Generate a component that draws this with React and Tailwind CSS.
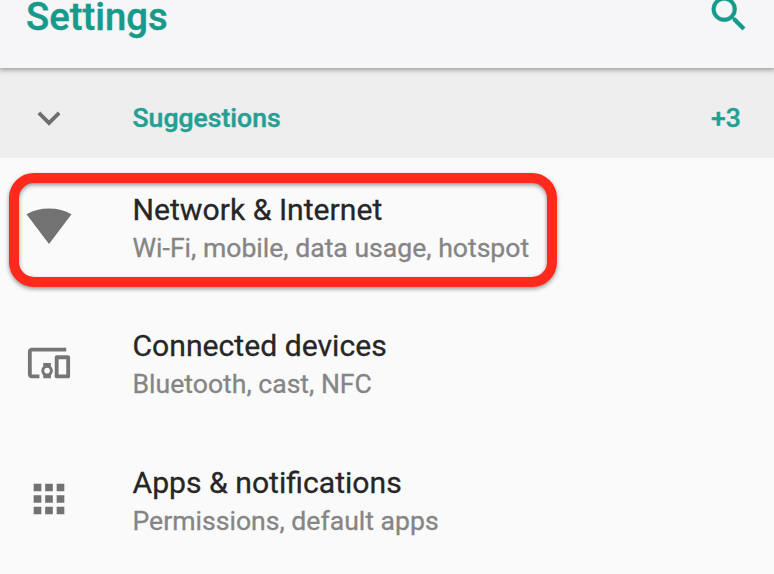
function SearchIcon() {
  return (
    <svg className="block h-[46px] w-[46px]" viewBox="0 0 24 24" fill="#159a8c" stroke="#159a8c" strokeWidth="0.2">
      <path d="M15.500 14h-.79l-.28-.27A6.471 6.471 0 0 0 16 9.500 6.500 6.500 0 1 0 9.500 16c1.610 0 3.090-.59 4.230-1.570l.27.28v.79l5 4.990L20.490 19l-4.990-5zm-6 0C7.010 14 5 11.990 5 9.500S7.010 5 9.500 5 14 7.010 14 9.500 11.990 14 9.500 14z" />
    </svg>
  );
}

function ChevronIcon() {
  return (
    <svg className="-mt-px block h-[46px] w-[46px]" viewBox="0 0 24 24" fill="#6f6f6f">
      <path d="M7.410 8.590 12 13.170l4.590-4.580L18 10l-6 6-6-6z" />
    </svg>
  );
}

function WifiIcon() {
  return (
    <svg className="block h-[46px] w-[46px]" viewBox="0 0 46 46" fill="#727272">
      <path d="M0.500 11.300C7 7.500 14.500 5.500 23 5.500s16 2 22.500 5.800L23 41z" />
    </svg>
  );
}

function DevicesIcon() {
  return (
    <svg className="block h-[46px] w-[46px]" viewBox="0 0 24 24" fill="#757575">
      <path d="M3 6h18V4H3c-1.100 0-2 .9-2 2v12c0 1.100.9 2 2 2h4v-2H3V6zm10 6H9v1.780c-.61.55-1 1.330-1 2.220s.39 1.670 1 2.220V20h4v-1.780c.61-.55 1-1.340 1-2.220s-.39-1.670-1-2.220V12zm-2 5.500c-.83 0-1.500-.67-1.500-1.500s.67-1.500 1.500-1.500 1.500.67 1.500 1.500-.67 1.500-1.500 1.500zM22 8h-6c-.5 0-1 .5-1 1v10c0 .5.5 1 1 1h6c.5 0 1-.5 1-1V9c0-.5-.5-1-1-1zm-1 10h-4v-8h4v8z" />
    </svg>
  );
}

function AppsIcon() {
  return (
    <svg className="block h-[46px] w-[46px]" viewBox="0 0 24 24" fill="#727272">
      <path d="M4 8h4V4H4v4zm6 12h4v-4h-4v4zm-6 0h4v-4H4v4zm0-6h4v-4H4v4zm6 0h4v-4h-4v4zm6-10v4h4V4h-4zm-6 4h4V4h-4v4zm6 6h4v-4h-4v4zm0 6h4v-4h-4v4z" />
    </svg>
  );
}

const rows = [
  { Icon: WifiIcon, title: "Network & Internet", detail: "Wi-Fi, mobile, data usage, hotspot", highlighted: true },
  { Icon: DevicesIcon, title: "Connected devices", detail: "Bluetooth, cast, NFC" },
  { Icon: AppsIcon, title: "Apps & notifications", detail: "Permissions, default apps" },
];

function SettingRow({ Icon, title, detail, highlighted }) {
  return (
    <li className="relative flex h-[136.5px] items-center pl-[26px]">
      <Icon />
      <div className="ml-[60.5px] pt-[5px] whitespace-nowrap">
        <div className="text-[30.150px] leading-[38px] text-[#262626] [-webkit-text-stroke:0.3px_#262626]">{title}</div>
        <div className="text-[26.6px] leading-[38px] text-[#858585] [-webkit-text-stroke:0.3px_#858585]">{detail}</div>
      </div>
      {highlighted && (
        <div className="absolute top-[15px] left-[9px] h-[114px] w-[548px] rounded-[25px] border-10 border-[#ff2a1c] drop-shadow-[0_2px_2px_rgba(0,0,0,0.4)]" />
      )}
    </li>
  );
}

export default function App() {
  return (
    <div className="h-[574px] w-[774px] overflow-hidden bg-[#fafafa] font-['Roboto',sans-serif]">
      <header className="relative flex h-[68px] items-start justify-between bg-[#f6f6f8] pr-[22px] pl-[26px] shadow-[0_1px_5px_1px_rgba(0,0,0,0.35)]">
        <h1 className="text-[38.3px] leading-[34px] font-medium text-[#159a8c] [-webkit-text-stroke:0.4px_#159a8c]">Settings</h1>
        <div className="-mt-[9px]">
          <SearchIcon />
        </div>
      </header>
      <section className="flex h-[90px] items-center bg-[#eeeeef] pt-[10px] pr-[33px] pl-[26px] text-[26.6px] font-medium text-[#23a093] [-webkit-text-stroke:0.4px_#23a093]">
        <ChevronIcon />
        <h2 className="ml-[60.5px] flex-1">Suggestions</h2>
        <span>+3</span>
      </section>
      <ul>
        {rows.map((row) => (
          <SettingRow key={row.title} {...row} />
        ))}
      </ul>
    </div>
  );
}
